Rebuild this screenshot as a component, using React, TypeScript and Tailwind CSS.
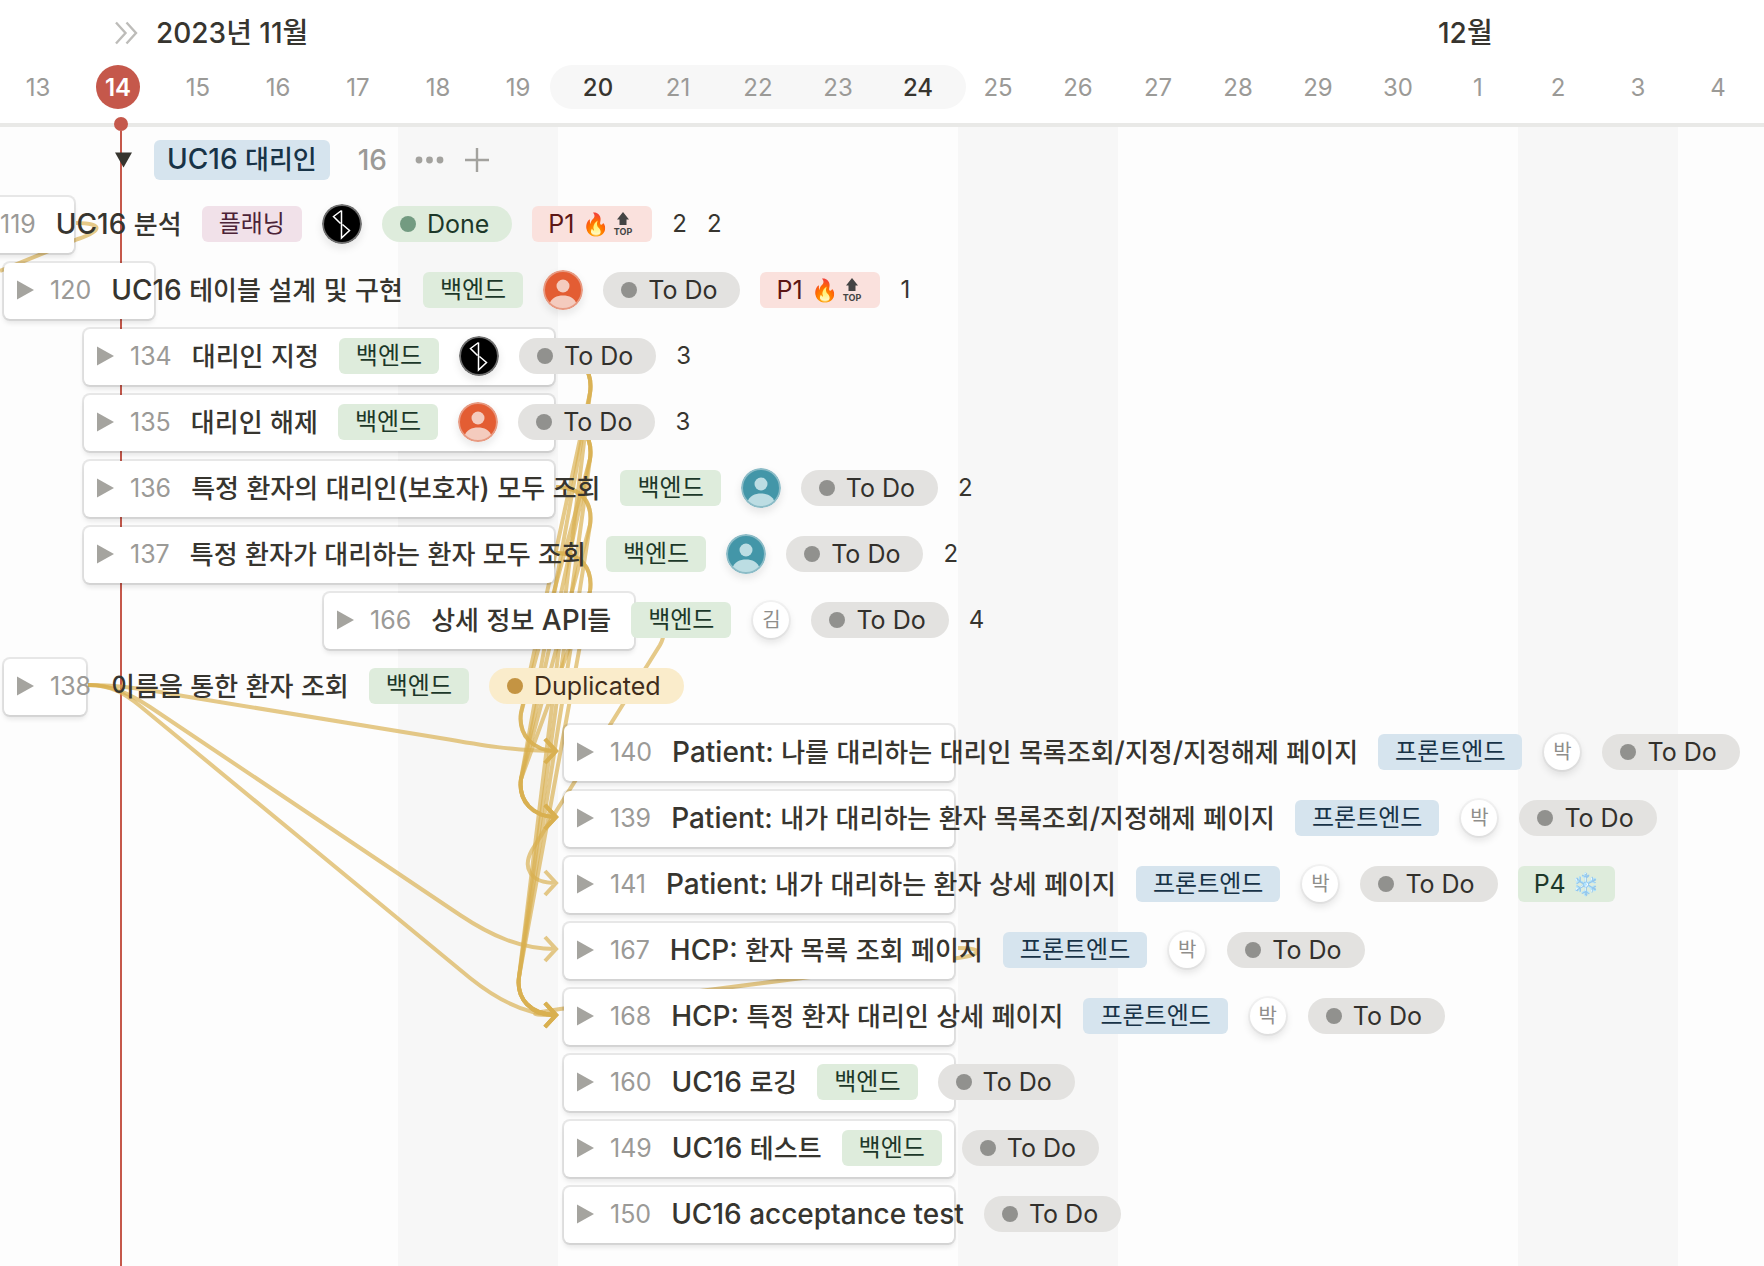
import React from "react";

type Status = "todo" | "done" | "duplicated";
type Person = "bolt" | "orange" | "teal" | "김" | "박";
type Tag = "플래닝" | "백엔드" | "프론트엔드";
type Priority = "P1" | "P4";

interface Task {
  id: number;
  title: string;
  start: number;
  width: number;
  tag?: Tag;
  person?: Person;
  status: Status;
  priority?: Priority;
  points?: number[];
}

const TASKS: Task[] = [
  { id: 119, title: "UC16 분석", start: -46, width: 120, tag: "플래닝", person: "bolt", status: "done", priority: "P1", points: [2, 2] },
  { id: 120, title: "UC16 테이블 설계 및 구현", start: 4, width: 150, tag: "백엔드", person: "orange", status: "todo", priority: "P1", points: [1] },
  { id: 134, title: "대리인 지정", start: 84, width: 470, tag: "백엔드", person: "bolt", status: "todo", points: [3] },
  { id: 135, title: "대리인 해제", start: 84, width: 470, tag: "백엔드", person: "orange", status: "todo", points: [3] },
  { id: 136, title: "특정 환자의 대리인(보호자) 모두 조회", start: 84, width: 470, tag: "백엔드", person: "teal", status: "todo", points: [2] },
  { id: 137, title: "특정 환자가 대리하는 환자 모두 조회", start: 84, width: 470, tag: "백엔드", person: "teal", status: "todo", points: [2] },
  { id: 166, title: "상세 정보 API들", start: 324, width: 310, tag: "백엔드", person: "김", status: "todo", points: [4] },
  { id: 138, title: "이름을 통한 환자 조회", start: 4, width: 82, tag: "백엔드", status: "duplicated" },
  { id: 140, title: "Patient: 나를 대리하는 대리인 목록조회/지정/지정해제 페이지", start: 564, width: 390, tag: "프론트엔드", person: "박", status: "todo" },
  { id: 139, title: "Patient: 내가 대리하는 환자 목록조회/지정해제 페이지", start: 564, width: 390, tag: "프론트엔드", person: "박", status: "todo" },
  { id: 141, title: "Patient: 내가 대리하는 환자 상세 페이지", start: 564, width: 390, tag: "프론트엔드", person: "박", status: "todo", priority: "P4" },
  { id: 167, title: "HCP: 환자 목록 조회 페이지", start: 564, width: 390, tag: "프론트엔드", person: "박", status: "todo" },
  { id: 168, title: "HCP: 특정 환자 대리인 상세 페이지", start: 564, width: 390, tag: "프론트엔드", person: "박", status: "todo" },
  { id: 160, title: "UC16 로깅", start: 564, width: 390, tag: "백엔드", status: "todo" },
  { id: 149, title: "UC16 테스트", start: 564, width: 390, tag: "백엔드", status: "todo" },
  { id: 150, title: "UC16 acceptance test", start: 564, width: 390, status: "todo" },
];

const WEEKENDS = new Set([5, 6, 12, 13, 19, 20]);

/* Hangul glyphs run larger than Latin ones at equal size, so they are set a step smaller. */
function MixedText({ text }: { text: string }) {
  return (
    <>
      {text.split(/([가-힣]+)/).map((part, i) =>
        /[가-힣]/.test(part) ? (
          <span key={i} className="text-[26px]">
            {part}
          </span>
        ) : (
          part
        ),
      )}
    </>
  );
}

const TAG_STYLE: Record<Tag, string> = {
  플래닝: "bg-[#f1e1e9] text-[#4c2337]",
  백엔드: "bg-[#deecdc] text-[#1c3829]",
  프론트엔드: "bg-[#d6e4ee] text-[#183347]",
};

const STATUS_STYLE: Record<Status, { label: string; pill: string; dot: string }> = {
  todo: { label: "To Do", pill: "bg-[#e3e2e0] text-[#32302c]", dot: "bg-[#91918e]" },
  done: { label: "Done", pill: "bg-[#deecdc] text-[#1c3829]", dot: "bg-[#739b81]" },
  duplicated: { label: "Duplicated", pill: "bg-[#faeccb] text-[#402c1b]", dot: "bg-[#c49443]" },
};

function StatusPill({ status }: { status: Status }) {
  const s = STATUS_STYLE[status];
  return (
    <span className={`flex h-9 shrink-0 items-center rounded-full pl-[18px] pr-[23px] text-[25px] leading-9 ${s.pill}`}>
      <span className={`mr-[11px] size-4 rounded-full ${s.dot}`} />
      {s.label}
    </span>
  );
}

function TopIcon() {
  return (
    <svg viewBox="0 0 20 26" className="h-[26px] w-5" aria-hidden="true">
      <path d="M10 1 L16 8.5 H13.5 V14 H6.5 V8.5 H4 Z" fill="#444" />
      <text x="10" y="24" textAnchor="middle" fontSize="9" fontWeight="700" fontFamily="Inter, sans-serif" fill="#444">
        TOP
      </text>
    </svg>
  );
}

function PriorityTag({ priority }: { priority: Priority }) {
  if (priority === "P4") {
    return (
      <span className="flex h-9 shrink-0 items-center rounded-md bg-[#deecdc] px-4 text-[25px] leading-9 text-[#1c3829]">
        P4
        <span className="ml-[6px] text-[22px]">❄️</span>
      </span>
    );
  }
  return (
    <span className="flex h-9 w-[120px] shrink-0 items-center rounded-md bg-[#fae1dd] pl-4 text-[25px] leading-9 text-[#5d1715]">
      P1
      <span className="ml-2 w-[25px] text-[22px]">🔥</span>
      <span className="ml-[6px]">
        <TopIcon />
      </span>
    </span>
  );
}

function Avatar({ person }: { person: Person }) {
  if (person === "bolt") {
    return (
      <svg viewBox="0 0 40 40" className="size-10 shrink-0 rounded-full shadow-[0_4px_8px_rgba(15,15,15,0.1)]" role="img" aria-label="담당자">
        <circle cx="20" cy="20" r="20" fill="#6f6f6f" />
        <circle cx="20" cy="20" r="18" fill="#000" />
        <path d="M19.5 6.5 V34 L27.5 26.5 L20.5 20.5 M19.5 6.5 L11.5 12.5 L18.5 19.5" fill="none" stroke="#fff" strokeWidth="1.5" />
      </svg>
    );
  }
  if (person === "orange" || person === "teal") {
    const orange = person === "orange";
    const base = orange ? "#e35d33" : "#4396a8";
    const light = orange ? "#f4cbbe" : "#bcdde3";
    const ring = orange ? "#e79a82" : "#8cbcc7";
    return (
      <svg viewBox="0 0 40 40" className="size-10 shrink-0 rounded-full shadow-[0_4px_8px_rgba(15,15,15,0.1)]" role="img" aria-label="담당자">
        <clipPath id={`face-${person}`}>
          <circle cx="20" cy="20" r="19" />
        </clipPath>
        <circle cx="20" cy="20" r="19" fill={base} />
        <g clipPath={`url(#face-${person})`} fill={light}>
          <circle cx="20" cy="16" r="6.5" />
          <path d="M6.5 40 V34 C8 28 14 25.5 20 25.5 C26 25.5 32 28 33.5 34 V40 Z" />
        </g>
        <circle cx="20" cy="20" r="19" fill="none" stroke={ring} strokeWidth="2" />
      </svg>
    );
  }
  return (
    <span className="mx-[2px] flex size-9 shrink-0 items-center justify-center rounded-full bg-white text-[20px] leading-none text-[#8f8e8b] shadow-[0_0_0_2px_rgba(15,15,15,0.04),0_4px_8px_rgba(15,15,15,0.12)]">
      {person}
    </span>
  );
}

function TaskRow({ task }: { task: Task }) {
  return (
    <li className="flex h-[66px] items-center">
      <div
        className="flex h-14 shrink-0 items-center gap-5 rounded-md bg-white pb-[2px] pl-[13px] whitespace-nowrap shadow-[0_0_0_2px_rgba(15,15,15,0.09),0_4px_5px_rgba(15,15,15,0.1)]"
        style={{ marginLeft: task.start, width: task.width }}
      >
        <div className="flex shrink-0 items-center gap-4">
          <button type="button" aria-label={`${task.id} 펼치기`} className="flex h-5 w-[17px] items-center">
            <svg viewBox="0 0 17 20" className="h-5 w-[17px]" aria-hidden="true">
              <path d="M0 0.5 L17 10 L0 19.5 Z" fill="#a5a49f" />
            </svg>
          </button>
          <span className="text-[25px] leading-9 text-[#9b9a97]">{task.id}</span>
        </div>
        <span className="shrink-0 text-[28px] leading-9 font-medium text-[#37352f]">
          <MixedText text={task.title} />
        </span>
        {task.tag && (
          <span className={`h-9 shrink-0 rounded-md px-[17px] text-[24px] leading-9 ${TAG_STYLE[task.tag]}`}>{task.tag}</span>
        )}
        {task.person && <Avatar person={task.person} />}
        <StatusPill status={task.status} />
        {task.priority && <PriorityTag priority={task.priority} />}
        {task.points?.map((p, i) => (
          <span key={i} className="shrink-0 text-[24px] leading-9 text-[#37352f]">
            {p}
          </span>
        ))}
      </div>
    </li>
  );
}

/* Source point on the right of a bar, down and back to the left edge of a later bar. */
const LOOPS: [number, number][] = [
  [355, 751], [421, 751],
  [355, 817], [421, 817], [487, 817], [553, 817],
  [355, 1015], [421, 1015], [487, 1015], [553, 1015],
];

const CURVES: { d: string; tip?: number }[] = [
  { d: "M76 223 C104 223 102 231 78 239 L0 271" },
  { d: "M88 685 C120 685 150 690 183 696 L440 738 C480 745 515 751 556 751", tip: 751 },
  { d: "M88 685 C112 685 130 694 150 707 L460 915 C490 935 520 949 556 949", tip: 949 },
  { d: "M88 685 C112 685 125 694 140 706 L470 978 C495 998 525 1015 556 1015", tip: 1015 },
  { d: "M638 619 C662 619 668 630 660 645 L532 850 C522 868 530 883 556 883", tip: 883 },
  { d: "M958 948 C985 948 982 955 958 958 L560 1009 C525 1014 530 1015 556 1015" },
];

function Dependencies() {
  const all = [
    ...CURVES,
    ...LOOPS.map(([from, to]) => {
      const x = to === 1015 ? 519 : 521;
      return {
        d: `M556 ${from} C582 ${from} 593 ${from + 16} 590 ${from + 38} L${x} ${to - 38} C${x - 3} ${to - 16} ${x + 12} ${to} 556 ${to}`,
        tip: to as number | undefined,
      };
    }),
  ];
  return (
    <svg className="pointer-events-none absolute inset-0 size-full" aria-hidden="true">
      {all.map((c, i) => (
        <path
          key={i}
          d={c.tip ? `${c.d} M545 ${c.tip - 12} L556 ${c.tip} L545 ${c.tip + 12}` : c.d}
          fill="none"
          stroke="#d9b04f"
          strokeOpacity="0.68"
          strokeWidth="4"
        />
      ))}
    </svg>
  );
}

function Day({ n, tone = "muted" }: { n: number; tone?: "muted" | "edge" | "today" }) {
  if (tone === "today") {
    return (
      <span className="flex w-20 shrink-0 justify-center">
        <span className="size-11 rounded-full bg-[#c5584b] text-center text-[24px] leading-[46px] font-semibold text-white">{n}</span>
      </span>
    );
  }
  return (
    <span className={`h-11 w-20 shrink-0 text-center text-[24px] leading-[46px] ${tone === "edge" ? "font-medium text-[#37352f]" : "text-[#9b9a97]"}`}>
      {n}
    </span>
  );
}

export default function App() {
  return (
    <main className="relative min-h-screen w-full overflow-hidden bg-[#fdfdfd] font-['Inter','Noto_Sans_CJK_KR',sans-serif]">
      <div className="absolute inset-0 -ml-[2px] flex" aria-hidden="true">
        {Array.from({ length: 23 }, (_, i) => (
          <div key={i} className={WEEKENDS.has(i) ? "w-20 shrink-0 bg-[#f7f7f7]" : "w-20 shrink-0"} />
        ))}
      </div>

      <header className="relative border-b-4 border-[#e9e9e7] bg-white pb-[14px]">
        <div className="flex h-[65px] items-center text-[28px] font-medium text-[#37352f]">
          <div className="flex w-[1438px] shrink-0 items-center pt-px pl-[115px]">
            <button type="button" aria-label="오늘로 이동" className="mr-[18px] flex h-6 w-[23px] items-center">
              <svg viewBox="0 0 23 24" className="h-6 w-[23px]" fill="none" stroke="#bdbcb9" strokeWidth="2.4" aria-hidden="true">
                <path d="M1 1.5 L10.5 12 L1 22.5 M11.5 1.5 L21 12 L11.5 22.5" />
              </svg>
            </button>
            <span className="leading-9">2023년 11월</span>
          </div>
          <span className="pt-px leading-9">12월</span>
        </div>
        <div className="-ml-[2px] flex">
          <Day n={13} />
          <Day n={14} tone="today" />
          {[15, 16, 17, 18, 19].map((n) => (
            <Day key={n} n={n} />
          ))}
          <div className="-mx-2 flex shrink-0 rounded-full bg-[#f7f7f7] px-2">
            <Day n={20} tone="edge" />
            <Day n={21} />
            <Day n={22} />
            <Day n={23} />
            <Day n={24} tone="edge" />
          </div>
          {[25, 26, 27, 28, 29, 30, 1, 2, 3, 4].map((n) => (
            <Day key={n} n={n} />
          ))}
        </div>
      </header>

      <div className="absolute top-[117px] bottom-0 left-[114px] flex w-[14px] flex-col items-center" aria-hidden="true">
        <div className="size-[14px] shrink-0 rounded-full bg-[#c5584b]" />
        <div className="w-[2px] grow bg-[#c5584b]" />
      </div>
      <Dependencies />

      <section className="relative">
        <div className="flex h-[65px] items-center pl-[115px]">
          <button type="button" aria-label="그룹 접기" className="flex h-4 w-[17px] items-center">
            <svg viewBox="0 0 17 16" className="h-4 w-[17px]" aria-hidden="true">
              <path d="M0 0.5 H17 L8.5 15.5 Z" fill="#37352f" />
            </svg>
          </button>
          <h2 className="ml-[22px] h-10 rounded-md bg-[#d6e4ee] px-[13px] text-[28px] leading-[38px] font-medium whitespace-nowrap text-[#183347]">
            <MixedText text="UC16 대리인" />
          </h2>
          <span className="ml-7 text-[28px] leading-9 font-medium text-[#9b9a97]">16</span>
          <button type="button" aria-label="더 보기" className="ml-7 flex h-8 w-[29px] items-center">
            <svg viewBox="0 0 29 8" className="h-2 w-[29px]" fill="#a3a29e" aria-hidden="true">
              <circle cx="4" cy="4" r="3.4" />
              <circle cx="14.5" cy="4" r="3.4" />
              <circle cx="25" cy="4" r="3.4" />
            </svg>
          </button>
          <button type="button" aria-label="추가" className="ml-[21px] flex size-6 items-center">
            <svg viewBox="0 0 24 24" className="size-6" stroke="#a3a29e" strokeWidth="2.4" aria-hidden="true">
              <path d="M12 0 V24 M0 12 H24" />
            </svg>
          </button>
        </div>
        <ul>
          {TASKS.map((t) => (
            <TaskRow key={t.id} task={t} />
          ))}
        </ul>
      </section>
    </main>
  );
}
